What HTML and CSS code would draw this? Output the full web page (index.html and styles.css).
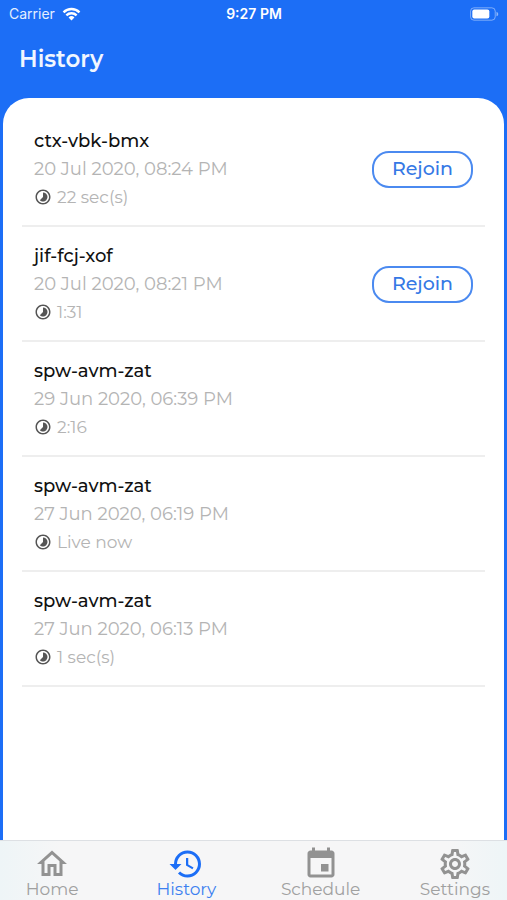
FILE: index.html
```html
<!DOCTYPE html>
<html lang="en">
<head>
<meta charset="utf-8">
<meta name="viewport" content="width=device-width, initial-scale=1">
<title>History</title>
<link rel="stylesheet" href="styles.css">
</head>
<body>
<svg class="defs" aria-hidden="true">
  <symbol id="timelapse" viewBox="0 0 24 24"><path d="M16.24 7.76C15.07 6.59 13.54 6 12 6v6l-4.24 4.24c2.34 2.34 6.14 2.34 8.49 0 2.34-2.34 2.34-6.14-.01-8.48zM12 2C6.48 2 2 6.48 2 12s4.48 10 10 10 10-4.48 10-10S17.52 2 12 2zm0 18c-4.42 0-8-3.58-8-8s3.58-8 8-8 8 3.58 8 8-3.58 8-8 8z"/></symbol>
</svg>
<div class="status">
  <div class="carrier">
    <span>Carrier</span>
    <svg class="wifi" viewBox="0 0 20 14" aria-hidden="true">
      <path d="M1.6 5.2a12 12 0 0 1 16.8 0M4.6 8.4a7.7 7.7 0 0 1 10.8 0" fill="none" stroke="currentColor" stroke-width="2.5"/>
      <path d="M6.9 10.7a4.4 4.4 0 0 1 6.2 0L10 13.8z" fill="currentColor"/>
    </svg>
  </div>
  <span class="time">9:27 PM</span>
  <svg class="battery" viewBox="0 0 30 14" aria-label="Battery">
    <rect x=".6" y=".6" width="25.5" height="12.8" rx="3.5" fill="none" stroke="currentColor" stroke-opacity=".45"/>
    <rect x="2.4" y="2.4" width="17.6" height="9.2" rx="2" fill="currentColor"/>
    <path d="M27.4 4.6c2.4 1 2.4 3.8 0 4.8z" fill="currentColor" fill-opacity=".5"/>
  </svg>
</div>
<header class="header"><h1>History</h1></header>
<main class="panel">
  <ul class="list">
    <li class="item">
      <div class="info">
        <h2>ctx-vbk-bmx</h2>
        <p class="date">20 Jul 2020, 08:24 PM</p>
        <p class="duration"><svg><use href="#timelapse"/></svg>22 sec(s)</p>
      </div>
      <button class="rejoin" type="button">Rejoin</button>
    </li>
    <li class="item">
      <div class="info">
        <h2>jif-fcj-xof</h2>
        <p class="date">20 Jul 2020, 08:21 PM</p>
        <p class="duration"><svg><use href="#timelapse"/></svg>1:31</p>
      </div>
      <button class="rejoin" type="button">Rejoin</button>
    </li>
    <li class="item">
      <div class="info">
        <h2>spw-avm-zat</h2>
        <p class="date">29 Jun 2020, 06:39 PM</p>
        <p class="duration"><svg><use href="#timelapse"/></svg>2:16</p>
      </div>
    </li>
    <li class="item">
      <div class="info">
        <h2>spw-avm-zat</h2>
        <p class="date">27 Jun 2020, 06:19 PM</p>
        <p class="duration"><svg><use href="#timelapse"/></svg>Live now</p>
      </div>
    </li>
    <li class="item">
      <div class="info">
        <h2>spw-avm-zat</h2>
        <p class="date">27 Jun 2020, 06:13 PM</p>
        <p class="duration"><svg><use href="#timelapse"/></svg>1 sec(s)</p>
      </div>
    </li>
  </ul>
</main>
<nav class="tabs">
  <a class="tab" href="#home">
    <svg viewBox="0 0 24 24"><path d="M12 5.69l5 4.5V18h-2v-6H9v6H7v-7.81l5-4.5M12 3L2 12h3v8h6v-6h2v6h6v-8h3L12 3z"/></svg>
    <span>Home</span>
  </a>
  <a class="tab active" href="#history" aria-current="page">
    <svg viewBox="0 0 24 24"><path d="M13 3a9 9 0 0 0-9 9H1l3.89 3.89.07.14L9 12H6c0-3.87 3.13-7 7-7s7 3.13 7 7-3.13 7-7 7c-1.93 0-3.68-.79-4.94-2.06l-1.42 1.42A8.954 8.954 0 0 0 13 21a9 9 0 0 0 0-18zm-1 5v5l4.28 2.54.72-1.21-3.5-2.08V8H12z"/></svg>
    <span>History</span>
  </a>
  <a class="tab" href="#schedule">
    <svg viewBox="0 0 24 24"><path d="M19 3h-1V1h-2v2H8V1H6v2H5c-1.11 0-1.99.9-1.99 2L3 19c0 1.1.89 2 2 2h14c1.1 0 2-.9 2-2V5c0-1.1-.9-2-2-2zm0 16H5V8h14v11zM12 12h5v5h-5z"/></svg>
    <span>Schedule</span>
  </a>
  <a class="tab" href="#settings">
    <svg viewBox="0 0 24 24"><path d="M19.43 12.98c.04-.32.07-.64.07-.98 0-.34-.03-.66-.07-.98l2.11-1.65c.19-.15.24-.42.12-.64l-2-3.46c-.09-.16-.26-.25-.44-.25-.06 0-.12.01-.17.03l-2.49 1c-.52-.4-1.08-.73-1.69-.98l-.38-2.65C14.46 2.18 14.25 2 14 2h-4c-.25 0-.46.18-.49.42l-.38 2.65c-.61.25-1.17.59-1.69.98l-2.49-1c-.06-.02-.12-.03-.18-.03-.17 0-.34.09-.43.25l-2 3.46c-.13.22-.07.49.12.64l2.11 1.65c-.04.32-.07.65-.07.98 0 .33.03.66.07.98l-2.11 1.65c-.19.15-.24.42-.12.64l2 3.46c.09.16.26.25.44.25.06 0 .12-.01.17-.03l2.49-1c.52.4 1.08.73 1.69.98l.38 2.65c.03.24.24.42.49.42h4c.25 0 .46-.18.49-.42l.38-2.65c.61-.25 1.17-.59 1.69-.98l2.49 1c.06.02.12.03.18.03.17 0 .34-.09.43-.25l2-3.46c.12-.22.07-.49-.12-.64l-2.11-1.65zm-1.98-1.71c.04.31.05.52.05.73 0 .21-.02.43-.05.73l-.14 1.13.89.7 1.08.84-.7 1.21-1.27-.51-1.04-.42-.9.68c-.43.32-.84.56-1.25.73l-1.06.43-.16 1.13-.2 1.35h-1.4l-.19-1.35-.16-1.13-1.06-.43c-.43-.18-.83-.41-1.23-.71l-.91-.7-1.06.43-1.27.51-.7-1.21 1.08-.84.89-.7-.14-1.13c-.03-.31-.05-.54-.05-.74s.02-.43.05-.73l.14-1.13-.89-.7-1.08-.84.7-1.21 1.27.51 1.04.42.9-.68c.43-.32.84-.56 1.25-.73l1.06-.43.16-1.13.2-1.35h1.39l.19 1.35.16 1.13 1.06.43c.43.18.83.41 1.23.71l.91.7 1.06-.43 1.27-.51.7 1.21-1.07.85-.89.7.14 1.13zM12 8c-2.21 0-4 1.79-4 4s1.79 4 4 4 4-1.79 4-4-1.79-4-4-4zm0 6c-1.1 0-2-.9-2-2s.9-2 2-2 2 .9 2 2-.9 2-2 2z"/></svg>
    <span>Settings</span>
  </a>
</nav>
</body>
</html>
```
FILE: styles.css
```css
* { box-sizing: border-box; }

body {
  margin: 0;
  min-height: 100vh;
  display: flex;
  flex-direction: column;
  background: #1c6ef6;
  font-family: Montserrat, Inter, sans-serif;
}

h1, h2, p, ul { margin: 0; padding: 0; }

.defs { position: absolute; width: 0; height: 0; }

.status {
  display: grid;
  grid-template-columns: 1fr auto 1fr;
  align-items: center;
  height: 28px;
  padding: 0 8px 0 9px;
  color: #fff;
  font: 14px/20px Inter, sans-serif;
}
.carrier { display: flex; align-items: center; gap: 7px; color: #e4eeff; }
.wifi { width: 19px; height: 14px; color: #fff; }
.time { font-weight: 600; }
.battery { justify-self: end; width: 29px; height: 14px; }

.header { height: 70px; padding: 16px 19px; color: #f0f6ff; }
.header h1 { font-size: 23px; line-height: 30px; font-weight: 600; }

.panel {
  flex: 1;
  margin: 0 3px;
  padding: 14px 19px;
  background: #fff;
  border-radius: 26px 26px 0 0;
}

.list { list-style: none; }
.item {
  display: flex;
  align-items: center;
  justify-content: space-between;
  padding: 15px 12px 14px;
  border-bottom: 2px solid #eee;
}
.info h2 { color: #111; font-size: 18px; line-height: 28px; font-weight: 500; }
.date { color: #b4b4b4; font-size: 18px; line-height: 28px; }
.duration {
  display: flex;
  align-items: center;
  gap: 5px;
  color: #b4b4b4;
  font-size: 17px;
  line-height: 28px;
}
.duration svg { width: 18px; height: 18px; fill: #555; }

.rejoin {
  width: 101px;
  height: 37px;
  padding: 0;
  border: 2px solid #4b8af0;
  border-radius: 17px;
  background: #fff;
  color: #3578e5;
  font: 500 19px/28px Montserrat, Inter, sans-serif;
}

.tabs {
  display: grid;
  grid-template-columns: repeat(4, 1fr);
  column-gap: 30px;
  height: 60px;
  padding-top: 5px;
  border-top: 1px solid #dde0e4;
  background: linear-gradient(90deg, #eef5f7, #f6f6f7 12%, #f6f6f7 88%, #eef5f7);
}
.tab {
  display: flex;
  flex-direction: column;
  align-items: center;
  color: #a0a0a0;
  font-size: 17px;
  line-height: 20px;
  text-decoration: none;
}
.tab svg { width: 36px; height: 36px; margin-bottom: -3px; fill: #929292; }
.tab.active { color: #3c80f0; }
.tab.active svg { fill: #1c6ef6; }
```
